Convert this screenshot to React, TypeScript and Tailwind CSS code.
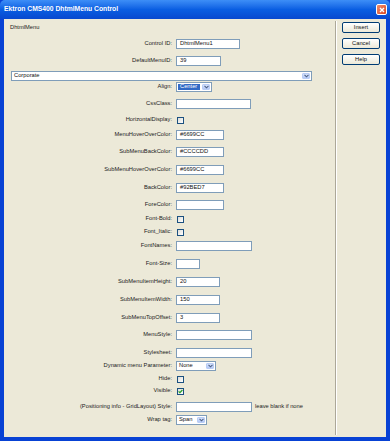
import React from "react";

type Row =
  | { kind: "text"; label: string; mt: string; width: string; value?: string; after?: string }
  | { kind: "check"; label: string; mt: string; checked?: boolean }
  | { kind: "select"; label: string; mt: string; width: string; value: string; selected?: boolean }
  | { kind: "wide"; mt: string; value: string };

const ROWS: Row[] = [
  { kind: "text", label: "Control ID:", mt: "mt-[6px]", width: "w-[64px]", value: "DhtmlMenu1" },
  { kind: "text", label: "DefaultMenuID:", mt: "mt-[7px]", width: "w-[45px]", value: "39" },
  { kind: "wide", mt: "mt-[5px]", value: "Corporate" },
  { kind: "select", label: "Align:", mt: "mt-[1px]", width: "w-[36px]", value: "Center", selected: true },
  { kind: "text", label: "CssClass:", mt: "mt-[7px]", width: "w-[75px]" },
  { kind: "check", label: "HorizontalDisplay:", mt: "mt-[6px]" },
  { kind: "text", label: "MenuHoverOverColor:", mt: "mt-[5px]", width: "w-[48px]", value: "#6699CC" },
  { kind: "text", label: "SubMenuBackColor:", mt: "mt-[7px]", width: "w-[48px]", value: "#CCCCDD" },
  { kind: "text", label: "SubMenuHoverOverColor:", mt: "mt-[8px]", width: "w-[48px]", value: "#6699CC" },
  { kind: "text", label: "BackColor:", mt: "mt-[8px]", width: "w-[48px]", value: "#92BED7" },
  { kind: "text", label: "ForeColor:", mt: "mt-[7px]", width: "w-[48px]" },
  { kind: "check", label: "Font-Bold:", mt: "mt-[4px]" },
  { kind: "check", label: "Font_Italic:", mt: "mt-[3px]" },
  { kind: "text", label: "FontNames:", mt: "mt-[4px]", width: "w-[76px]" },
  { kind: "text", label: "Font-Size:", mt: "mt-[8px]", width: "w-[24px]" },
  { kind: "text", label: "SubMenuItemHeight:", mt: "mt-[8px]", width: "w-[44px]", value: "20" },
  { kind: "text", label: "SubMenuItemWidth:", mt: "mt-[8px]", width: "w-[44px]", value: "150" },
  { kind: "text", label: "SubMenuTopOffset:", mt: "mt-[8px]", width: "w-[44px]", value: "3" },
  { kind: "text", label: "MenuStyle:", mt: "mt-[7px]", width: "w-[76px]" },
  { kind: "text", label: "Stylesheet:", mt: "mt-[8px]", width: "w-[76px]" },
  { kind: "select", label: "Dynamic menu Parameter:", mt: "mt-[3px]", width: "w-[40px]", value: "None" },
  { kind: "check", label: "Hide:", mt: "mt-[3px]" },
  { kind: "check", label: "Visible:", mt: "mt-[2px]", checked: true },
  {
    kind: "text",
    label: "(Positioning info - GridLayout) Style:",
    mt: "mt-[6px]",
    width: "w-[76px]",
    after: "leave blank if none",
  },
  { kind: "select", label: "Wrap tag:", mt: "mt-[3px]", width: "w-[31px]", value: "Span" },
];

function Chevron() {
  return (
    <svg width="5" height="4" viewBox="0 0 5 4">
      <path d="M0.5 0.8 L2.5 2.8 L4.5 0.8" fill="none" stroke="#4d6185" strokeWidth="1.1" />
    </svg>
  );
}

function DropButton() {
  return (
    <div className="w-[8px] m-px rounded-[1px] bg-gradient-to-b from-[#d6e3fd] to-[#b4c8f6] border border-[#b9cdf5] flex items-center justify-center">
      <Chevron />
    </div>
  );
}

function TextBox({ width, value }: { width: string; value?: string }) {
  return (
    <div className={`${width} h-[10px] border border-[#7f9db9] bg-white flex items-center px-[3px] text-[#111]`}>
      {value}
    </div>
  );
}

function Select({ width, value, selected }: { width: string; value: string; selected?: boolean }) {
  return (
    <div className={`${width} h-[10px] border border-[#7f9db9] bg-white flex`}>
      <div
        className={`flex-1 flex items-center px-[2px] ${
          selected ? "bg-[#316ac5] text-white m-px" : "text-[#111]"
        }`}
      >
        {value}
      </div>
      <DropButton />
    </div>
  );
}

function CheckBox({ checked }: { checked?: boolean }) {
  return (
    <div className="ml-px w-[7px] h-[7px] border border-[#1c5180] bg-gradient-to-br from-[#dcdcd7] to-white flex items-center justify-center">
      {checked && (
        <svg width="5" height="5" viewBox="0 0 5 5">
          <path d="M0.6 2.4 L1.9 3.7 L4.4 1" fill="none" stroke="#21a121" strokeWidth="1.2" />
        </svg>
      )}
    </div>
  );
}

function XpButton({ label }: { label: string }) {
  return (
    <div className="w-[38px] h-[11px] rounded-[2px] border border-[#003c74] bg-gradient-to-b from-white to-[#ece9d8] flex items-center justify-center text-[#111]">
      {label}
    </div>
  );
}

function FormRow({ row }: { row: Row }) {
  if (row.kind === "wide") {
    return (
      <div className={`${row.mt} h-[10px] pl-[7px]`}>
        <Select width="w-[301px]" value={row.value} />
      </div>
    );
  }
  return (
    <div className={`${row.mt} h-[10px] flex items-center`}>
      <div className="w-[168px] text-right text-[#222] whitespace-nowrap">{row.label}</div>
      <div className="ml-[4px] flex items-center">
        {row.kind === "text" && <TextBox width={row.width} value={row.value} />}
        {row.kind === "select" && <Select width={row.width} value={row.value} selected={row.selected} />}
        {row.kind === "check" && <CheckBox checked={row.checked} />}
        {row.kind === "text" && row.after && (
          <span className="ml-[3px] whitespace-nowrap text-[#222]">{row.after}</span>
        )}
      </div>
    </div>
  );
}

export default function App() {
  return (
    <div className="w-[390px] h-[441px] flex flex-col bg-[#0842d4] font-['Liberation_Sans',Arial,sans-serif] text-[5.75px] leading-none overflow-hidden">
      {/* title bar */}
      <div className="h-[19px] shrink-0 flex items-center justify-between pl-[4px] pr-[3px] bg-gradient-to-b from-[#3d8ef7] via-[#0a5ee2] to-[#0848cf] rounded-t-[5px]">
        <span className="text-white font-bold text-[6.75px]">Ektron CMS400 DhtmlMenu Control</span>
        <div className="w-[11px] h-[11px] rounded-[2px] border border-white bg-gradient-to-br from-[#f08c6c] to-[#d8451c] flex items-center justify-center">
          <svg width="6" height="6" viewBox="0 0 6 6">
            <path d="M1 1 L5 5 M5 1 L1 5" stroke="white" strokeWidth="1.4" />
          </svg>
        </div>
      </div>

      {/* client area */}
      <div className="flex-1 mx-[4px] mb-[4px] bg-[#ece9d8] flex">
        <div className="w-[331px] flex flex-col pt-[4px]">
          <div className="h-[10px] flex items-center pl-[6px] text-[#222]">DhtmlMenu</div>
          {ROWS.map((row, i) => (
            <FormRow key={i} row={row} />
          ))}
        </div>

        <div className="flex-1 flex py-[2px]">
          <div className="w-px bg-[#aca899]" />
          <div className="w-px bg-white" />
          <div className="flex flex-col gap-[5px] pl-[5px] pt-[1px]">
            <XpButton label="Insert" />
            <XpButton label="Cancel" />
            <XpButton label="Help" />
          </div>
        </div>
      </div>
    </div>
  );
}
